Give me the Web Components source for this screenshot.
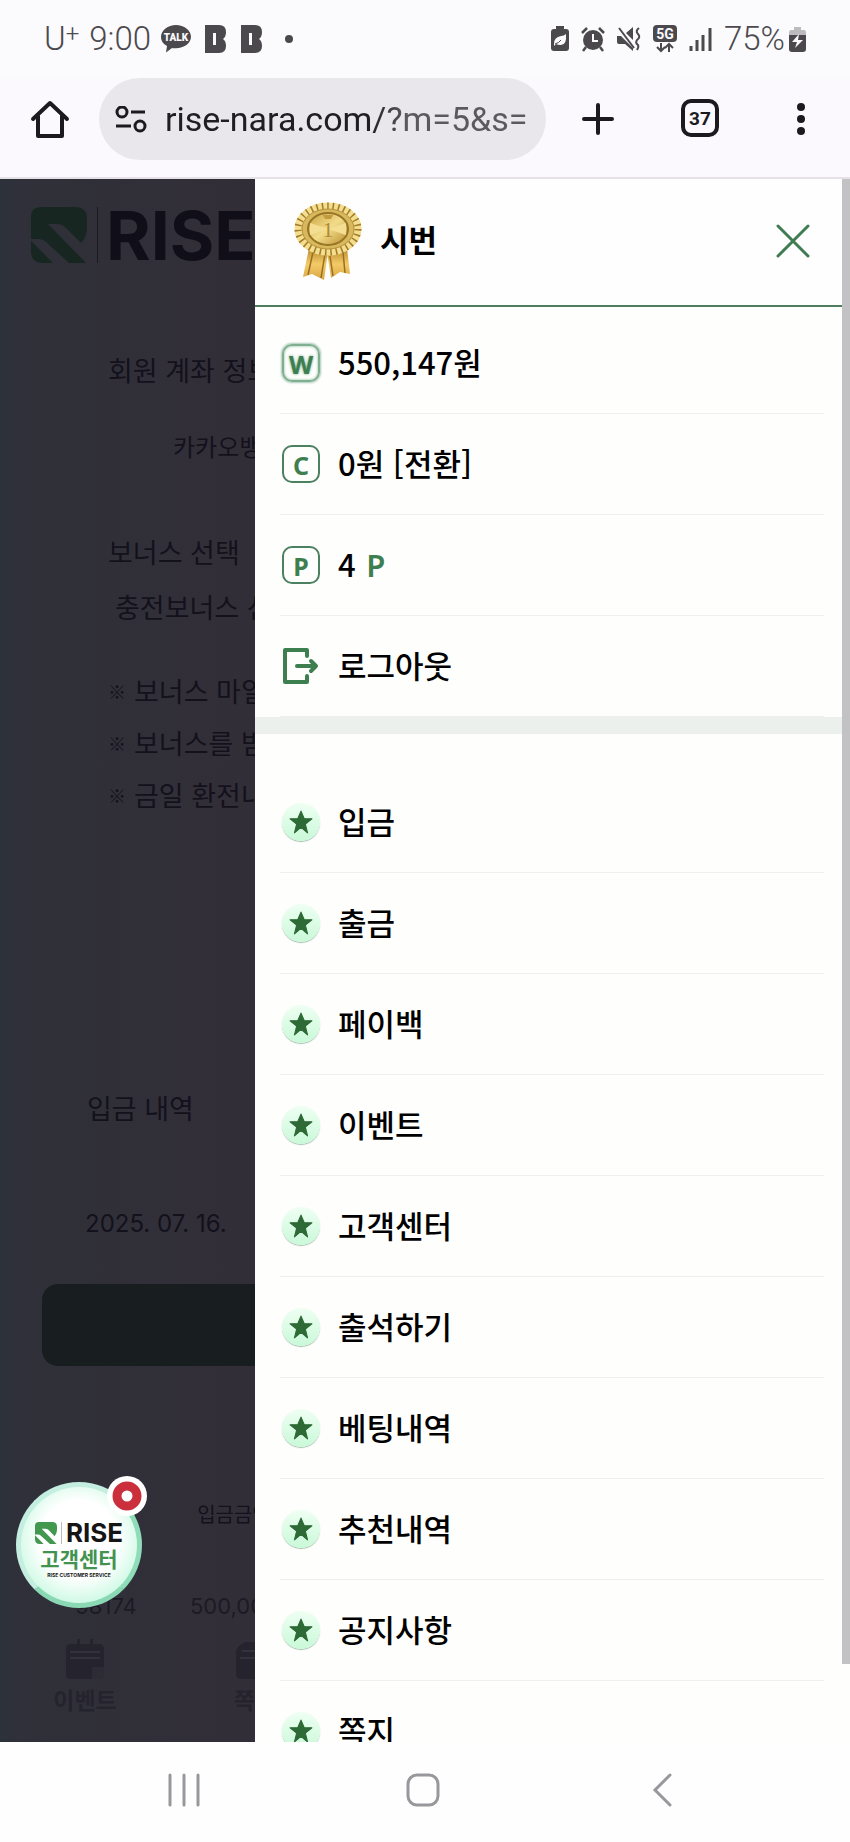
<!DOCTYPE html>
<html lang="ko">
<head>
<meta charset="utf-8">
<meta name="viewport" content="width=device-width, initial-scale=1">
<title>RISE</title>
<style>
    body {
        margin: 0;
        height: 100vh;
        font-family: "Noto Sans CJK KR", "Noto Sans", sans-serif;
        color: #000;
        background: #fefefe;
    }
</style>
</head>
<body>
<phone-screen>
    <status-bar slot="top"></status-bar>
    <browser-bar slot="top"></browser-bar>
    <deposit-page slot="page"></deposit-page>
    <chat-button slot="float"></chat-button>
    <side-drawer slot="drawer" name="시번">
        <menu-row slot="account"><letter-icon slot="icon" class="glow">W</letter-icon>550,147원</menu-row>
        <menu-row slot="account"><letter-icon slot="icon">C</letter-icon>0원 [전환]</menu-row>
        <menu-row slot="account"><letter-icon slot="icon">P</letter-icon>4 <point-unit>P</point-unit></menu-row>
        <menu-row slot="account" href="#logout"><logout-icon slot="icon"></logout-icon>로그아웃</menu-row>
        <menu-row href="#deposit"><star-icon slot="icon"></star-icon>입금</menu-row>
        <menu-row href="#withdraw"><star-icon slot="icon"></star-icon>출금</menu-row>
        <menu-row href="#payback"><star-icon slot="icon"></star-icon>페이백</menu-row>
        <menu-row href="#event"><star-icon slot="icon"></star-icon>이벤트</menu-row>
        <menu-row href="#support"><star-icon slot="icon"></star-icon>고객센터</menu-row>
        <menu-row href="#attend"><star-icon slot="icon"></star-icon>출석하기</menu-row>
        <menu-row href="#bets"><star-icon slot="icon"></star-icon>베팅내역</menu-row>
        <menu-row href="#referral"><star-icon slot="icon"></star-icon>추천내역</menu-row>
        <menu-row href="#notice"><star-icon slot="icon"></star-icon>공지사항</menu-row>
        <menu-row href="#memo"><star-icon slot="icon"></star-icon>쪽지</menu-row>
    </side-drawer>
    <system-nav slot="bottom"></system-nav>
</phone-screen>

<template id="phone-screen">
    <style>
        :host {
            display: flex;
            flex-direction: column;
            height: 100%;
        }
        main {
            flex: 1;
            min-height: 0;
            display: grid;
            grid-template: 100% / 30% 70%;
            overflow: hidden;
            position: relative;
        }
        .page {
            grid-area: 1 / 1 / 2 / 3;
            min-height: 0;
        }
        .drawer {
            grid-area: 1 / 2;
            min-height: 0;
            z-index: 2;
        }
        .float {
            position: absolute;
            left: 16px;
            bottom: 134px;
        }
    </style>
    <slot name="top"></slot>
    <main>
        <div class="page"><slot name="page"></slot></div>
        <div class="float"><slot name="float"></slot></div>
        <div class="drawer"><slot name="drawer"></slot></div>
    </main>
    <slot name="bottom"></slot>
</template>

<template id="status-bar">
    <style>
        :host {
            display: flex;
            justify-content: space-between;
            align-items: center;
            height: 78px;
            box-sizing: border-box;
            padding: 0 44px;
            background: #fbfafd;
            color: #4b494d;
            font: 300 33px/36px Roboto, "Noto Sans CJK KR", sans-serif;
        }
        div {
            display: flex;
            align-items: center;
        }
        sup {
            font-size: 24px;
            line-height: 1;
            vertical-align: 8px;
        }
        .time { margin: 0 10px; }
        .b { margin-left: 14px; }
        .dot { margin-left: 22px; }
        .right { gap: 12px; }
        .battery { margin-left: -8px; }
        svg { display: block; }
    </style>
    <div>
        <span>U<sup>+</sup></span>
        <span class="time">9:00</span>
        <svg width="30" height="28" viewBox="0 0 30 28">
            <path fill="#4b494d" d="M15 0C7 0 0 5 0 12c0 4 2 7 6 9L5 27.500l6-4.500c1 .200 3 .300 4 .300 8 0 15-5 15-11.500S23 0 15 0z"/>
            <text x="15" y="16" text-anchor="middle" font-family="Roboto, sans-serif" font-size="10" font-weight="900" fill="#fbfafd">TALK</text>
        </svg>
        <svg class="b" width="22" height="28" viewBox="0 0 22 28">
            <path fill="#4b494d" fill-rule="evenodd" d="M0 0H14Q21 0 21 7Q21 12 18 14Q21 16 21 21Q21 28 14 28H0ZM8 8V20H11V8Z"/>
        </svg>
        <svg class="b" width="22" height="28" viewBox="0 0 22 28">
            <path fill="#4b494d" fill-rule="evenodd" d="M0 0H14Q21 0 21 7Q21 12 18 14Q21 16 21 21Q21 28 14 28H0ZM8 8V20H11V8Z"/>
        </svg>
        <svg class="dot" width="8" height="8"><circle cx="4" cy="4" r="4" fill="#4b494d"/></svg>
    </div>
    <div class="right">
        <svg width="18" height="26" viewBox="0 0 18 26">
            <path fill="#4b494d" d="M5 0H13V3H15Q18 3 18 6V22Q18 25 15 25H3Q0 25 0 22V6Q0 3 3 3H5Z"/>
            <path fill="#fbfafd" d="M15 8Q16 20 9 19Q7 19 5 18L3 20V18Q3 11 10 10Q13 10 15 8Z"/>
            <path stroke="#4b494d" fill="none" d="M4 18Q8 17 10 14"/>
        </svg>
        <svg width="24" height="26" viewBox="0 0 24 26">
            <circle cx="12" cy="14" r="10" fill="#4b494d"/>
            <path fill="none" stroke="#4b494d" stroke-width="2.500" d="M1 7L6 2M23 7L18 2M5 21L2 25M19 21L22 25"/>
            <path fill="none" stroke="#fbfafd" stroke-width="2" d="M12 8V15H17"/>
        </svg>
        <svg width="24" height="26" viewBox="0 0 24 26">
            <path fill="#4b494d" d="M0 10H4L16 22V25L8 18H2Q0 18 0 16ZM9 7L16 1V14Z"/>
            <path fill="none" stroke="#4b494d" stroke-width="2" d="M2 2L17 22M22 2Q18 5 21 8Q24 11 20 14Q18 17 21 19Q22 21 20 24"/>
        </svg>
        <svg width="24" height="28" viewBox="0 0 24 28">
            <rect width="24" height="17" rx="4" fill="#4b494d"/>
            <text x="12" y="14" text-anchor="middle" font-family="Roboto, sans-serif" font-size="14" font-weight="700" fill="#fbfafd">5G</text>
            <path fill="none" stroke="#4b494d" stroke-width="2" d="M8 18V26M4 22L8 26L12 22M16 27V19M12 23L16 19L20 23"/>
        </svg>
        <svg width="23" height="24" viewBox="0 0 23 24">
            <path fill="none" stroke="#4b494d" stroke-width="3" d="M2 19V24M8 13V24M14 8V24M21 1V24"/>
        </svg>
        <span>75%</span>
        <svg class="battery" width="17" height="25" viewBox="0 0 17 25">
            <path fill="#bdbbc0" d="M5 0H12V3H15Q17 3 17 6V9H0V6Q0 3 2 3H5Z"/>
            <path fill="#4b494d" d="M0 8H17V22Q17 25 14 25H3Q0 25 0 22Z"/>
            <path fill="#fbfafd" d="M10 7L3 15H8L6 21L14 13H9Z"/>
        </svg>
    </div>
</template>

<template id="browser-bar">
    <style>
        :host {
            display: flex;
            align-items: center;
            box-sizing: border-box;
            height: 101px;
            padding: 0 30px 17px;
            border-bottom: 2px solid #e4e2e7;
            background: #fbf9fe;
        }
        button {
            border: 0;
            padding: 0;
            background: none;
            color: #1b1a1f;
            display: grid;
            place-items: center;
            width: 40px;
            height: 40px;
        }
        .address {
            flex: 1;
            min-width: 0;
            display: flex;
            align-items: center;
            gap: 18px;
            height: 82px;
            box-sizing: border-box;
            margin: 0 32px 0 29px;
            padding: 0 16px;
            border-radius: 41px;
            background: #e9e7ec;
        }
        .address svg { flex: none; }
        input {
            flex: 1;
            min-width: 0;
            border: 0;
            padding: 0;
            outline: 0;
            font: 400 34px/44px Roboto, sans-serif;
            color: transparent;
            background: linear-gradient(90deg, #1f1e23 56%, #5a595e 66%);
            -webkit-background-clip: text;
            background-clip: text;
        }
        .tools {
            display: flex;
            gap: 63px;
        }
        .tabs {
            box-sizing: border-box;
            width: 38px;
            height: 38px;
            border: 4px solid #1b1a1f;
            border-radius: 10px;
            font: 700 19px/1 Roboto, sans-serif;
        }
        .more { width: 38px; }
    </style>
    <button aria-label="홈">
        <svg width="40" height="40" viewBox="0 0 40 40" fill="none" stroke="#1b1a1f" stroke-width="4" stroke-linejoin="round" stroke-linecap="round">
            <path d="M3 20L20 4L37 20M8 17V37H32V17"/>
        </svg>
    </button>
    <div class="address">
        <svg width="32" height="27" viewBox="0 0 32 27" fill="none" stroke="#1b1a1f" stroke-width="3">
            <circle cx="7" cy="6" r="5"/><circle cx="25" cy="20" r="5"/>
            <path d="M16 6H30M1 20H16"/>
        </svg>
        <input value="rise-nara.com/?m=5&amp;s=" aria-label="주소">
    </div>
    <div class="tools">
        <button aria-label="새 탭">
            <svg width="34" height="34" viewBox="0 0 34 34"><path stroke="#1b1a1f" stroke-width="4" stroke-linecap="round" d="M17 3V31M3 17H31"/></svg>
        </button>
        <button class="tabs">37</button>
        <button class="more" aria-label="더보기">
            <svg width="10" height="34" fill="#1b1a1f"><circle cx="5" cy="5" r="4"/><circle cx="5" cy="17" r="4"/><circle cx="5" cy="29" r="4"/></svg>
        </button>
    </div>
</template>

<template id="rise-mark">
    <style>
        :host {
            display: block;
            flex: none;
        }
        svg {
            display: block;
            width: 100%;
            height: 100%;
        }
    </style>
    <svg viewBox="0 0 56 56" fill="currentColor">
        <path d="M10 0H44Q56 0 56 12V20Q56 30 50 36L34 20Q31 17 26 17H17L55 56H38L15 35Q12 32 8 32H0V10Q0 0 10 0Z"/>
        <path d="M0 34L22 56H12Q0 56 0 44Z"/>
    </svg>
</template>

<template id="deposit-page">
    <style>
        :host {
            display: flex;
            flex-direction: column;
            height: 100%;
            box-sizing: border-box;
            color: #13111c;
            font-size: 27px;
            line-height: 40px;
            white-space: nowrap;
            background: linear-gradient(90deg, #2d323a, #2f3039 2%, #322e38 30%);
        }
        header {
            display: flex;
            align-items: center;
            flex: none;
            height: 112px;
            padding-left: 31px;
            font: 700 68px/56px Inter, sans-serif;
            color: #100e19;
        }
        rise-mark {
            width: 56px;
            height: 56px;
            color: #172621;
        }
        .line {
            width: 1px;
            height: 56px;
            margin: 0 8px 0 10px;
            background: #1b1a24;
        }
        h2, p, ul {
            margin: 0;
            padding: 0;
            font-size: 27px;
            font-weight: 400;
        }
        .form { padding: 59px 0 0 108px; }
        .bank {
            padding: 36px 0 0 65px;
            font-size: 24px;
        }
        .bonus { padding-top: 66px; }
        .select { padding: 15px 0 0 7px; }
        ul {
            list-style: none;
            padding-top: 38px;
            line-height: 52px;
        }
        li {
            display: grid;
            grid-template-columns: 26px auto;
        }
        li b {
            font-size: 18px;
        }
        .history {
            padding: 267px 0 0 87px;
        }
        .date {
            padding: 76px 0 0 85px;
            font: 400 24px/40px Inter, sans-serif;
        }
        .search {
            border: 0;
            margin: 40px 42px 0;
            height: 82px;
            flex: none;
            border-radius: 16px;
            background: #181d20;
        }
        table {
            width: 256px;
            margin: 102px 0 0 42px;
            table-layout: fixed;
            border-collapse: collapse;
            text-align: center;
            font-size: 20px;
            flex: none;
        }
        th {
            padding: 0;
            height: 92px;
            font-weight: 400;
        }
        td {
            padding: 31px 0 0;
            font: 400 22px/30px Inter, sans-serif;
            color: #1c1a25;
        }
        nav {
            display: grid;
            grid-template-columns: repeat(5, 1fr);
            margin-top: auto;
            padding-bottom: 27px;
        }
        nav a {
            display: flex;
            flex-direction: column;
            align-items: center;
            gap: 4px;
            text-decoration: none;
            color: #25232d;
            font-size: 23px;
            font-weight: 700;
            line-height: 32px;
        }
    </style>
    <header><rise-mark></rise-mark><span class="line"></span>RISE</header>
    <section class="form">
        <h2>회원 계좌 정보</h2>
        <p class="bank">카카오뱅크</p>
        <h2 class="bonus">보너스 선택</h2>
        <p class="select">충전보너스 선택</p>
        <ul>
            <li><b>※</b> 보너스 마일</li>
            <li><b>※</b> 보너스를 받</li>
            <li><b>※</b> 금일 환전내</li>
        </ul>
    </section>
    <h2 class="history">입금 내역</h2>
    <p class="date">2025. 07. 16.</p>
    <button class="search" aria-label="조회"></button>
    <table>
        <tr><th></th><th>입금금액</th></tr>
        <tr><td>98174</td><td>500,000</td></tr>
    </table>
    <nav>
        <a href="#event">
            <svg width="38" height="40" viewBox="0 0 38 40">
                <path fill="#25232d" d="M11 0H14V5H24V0H27V5H33Q38 5 38 10V35Q38 40 33 40H5Q0 40 0 35V10Q0 5 5 5H11Z"/>
                <path stroke="#34313c" stroke-width="2" d="M4 13H34M4 19H34"/>
                <path fill="#2d2b35" d="M26 28H38V35Q38 40 33 40H26Z"/>
            </svg>
            이벤트
        </a>
        <a href="#memo">
            <svg width="38" height="40" viewBox="0 0 38 40">
                <path fill="#25232d" d="M10 3H28L38 12V35Q38 40 33 40H5Q0 40 0 35V12Q2 6 10 3Z"/>
                <path stroke="#34313c" stroke-width="2" d="M6 12H32M4 19H34"/>
            </svg>
            쪽지
        </a>
    </nav>
</template>

<template id="chat-button">
    <style>
        :host { display: block; }
        button {
            position: relative;
            display: flex;
            flex-direction: column;
            align-items: center;
            box-sizing: border-box;
            width: 126px;
            height: 126px;
            padding: 35px 0 0;
            border: 5px solid #a5e4c9;
            border-color: #c4eee0 #8fdcb9 #8bd8b5 #c4eee0;
            border-radius: 50%;
            background: radial-gradient(circle at 50% 45%, #fff 45%, #d3fae7 72%);
            font-family: inherit;
            color: #151515;
        }
        .logo {
            display: flex;
            align-items: center;
            font: 700 26px/22px Inter, sans-serif;
        }
        rise-mark {
            width: 22px;
            height: 22px;
            color: #43984f;
        }
        i {
            width: 1px;
            height: 22px;
            margin: 0 4px;
            background: #bbb;
        }
        strong {
            font-size: 21px;
            line-height: 28px;
            color: #439350;
        }
        small {
            font: 700 5px/6px Inter, sans-serif;
        }
        .badge {
            position: absolute;
            top: -11px;
            right: -10px;
            width: 40px;
            height: 40px;
        }
    </style>
    <button>
        <span class="logo"><rise-mark></rise-mark><i></i>RISE</span>
        <strong>고객센터</strong>
        <small>RISE CUSTOMER SERVICE</small>
        <svg class="badge" viewBox="0 0 40 40">
            <circle cx="20" cy="20" r="20" fill="#fff"/>
            <circle cx="20" cy="20" r="10" fill="#fff" stroke="#cb2f3b" stroke-width="9"/>
        </svg>
    </button>
</template>

<template id="medal-icon">
    <style>
        :host { display: block; }
        svg { display: block; }
    </style>
    <svg width="68" height="78" viewBox="0 0 68 78">
        <defs>
            <linearGradient id="gold" x1="0" y1="0" x2="1" y2="1">
                <stop offset="0" stop-color="#c9a23e"/>
                <stop offset=".5" stop-color="#f3dc8a"/>
                <stop offset="1" stop-color="#b98d2c"/>
            </linearGradient>
            <linearGradient id="tail" x1="0" y1="0" x2="0" y2="1">
                <stop offset="0" stop-color="#b88a2d"/>
                <stop offset=".5" stop-color="#f4ca68"/>
                <stop offset="1" stop-color="#d9a744"/>
            </linearGradient>
        </defs>
        <path fill="url(#tail)" d="M15 46L9 75L18 72L30 78L34 50ZM53 46L56 72L46 70L37 76L33 50Z"/>
        <path fill="none" stroke="#98701f" stroke-width="1.500" d="M19 50L14 73M31 52L27 76M49 50L51 71M36 54L39 74"/>
        <ellipse cx="34" cy="27" rx="33" ry="26" fill="#e2c263"/>
        <ellipse cx="34" cy="27" rx="30" ry="23" fill="none" stroke="#f3dd8f" stroke-width="7"/>
        <ellipse cx="34" cy="27" rx="30" ry="23" fill="none" stroke="#a37a28" stroke-width="7" stroke-dasharray="1.500 3.900"/>
        <ellipse cx="34" cy="27" rx="26" ry="20" fill="#d7b85c" stroke="#b8933c"/>
        <ellipse cx="34" cy="27" rx="20" ry="16" fill="url(#gold)" stroke="#987426" stroke-width="2"/>
        <path fill="#f3de92" d="M34 27L16 21V33ZM34 27L52 21V33Z"/>
        <path fill="#c09b3d" d="M29 13H39L37 17H31Z"/>
        <text x="34" y="35" text-anchor="middle" font-family="Liberation Serif, serif" font-size="22" fill="#b08a35">1</text>
    </svg>
</template>

<template id="side-drawer">
    <style>
        :host {
            display: flex;
            height: 100%;
            background: #fefefd;
        }
        .panel {
            flex: 1;
            margin-right: -8px;
            overflow: hidden;
        }
        header {
            display: flex;
            align-items: center;
            box-sizing: border-box;
            height: 128px;
            padding: 0 32px 2px 39px;
            border-bottom: 2px solid #4e7d60;
            background: #fefefe;
        }
        h1 {
            flex: 1;
            margin: 0 0 4px 18px;
            font-size: 31px;
            line-height: 44px;
            font-weight: 700;
        }
        button {
            border: 0;
            padding: 8px;
            background: none;
        }
        button svg { display: block; }
        .account {
            padding: 6px 26px 0 25px;
            border-bottom: 17px solid #ebf0ed;
        }
        .menu { padding: 38px 26px 0 25px; }
        .scroll {
            flex: none;
            width: 8px;
            height: 95%;
            background: #c2c1c4;
            z-index: 1;
        }
    </style>
    <div class="panel">
        <header>
            <medal-icon></medal-icon>
            <h1></h1>
            <button aria-label="닫기">
                <svg width="34" height="34" viewBox="0 0 34 34"><path stroke="#3f7c52" stroke-width="3" stroke-linecap="round" d="M2 2L32 32M32 2L2 32"/></svg>
            </button>
        </header>
        <section class="account"><slot name="account"></slot></section>
        <nav class="menu"><slot></slot></nav>
    </div>
    <div class="scroll"></div>
</template>

<template id="menu-row">
    <style>
        :host {
            display: block;
            border-bottom: 1px solid #f0eeef;
        }
        a {
            display: flex;
            align-items: center;
            gap: 18px;
            height: 100px;
            padding-left: 2px;
            color: inherit;
            text-decoration: none;
            font-size: 31px;
            font-weight: 500;
            line-height: 44px;
        }
        span { padding-bottom: 3px; }
    </style>
    <a><slot name="icon"></slot><span><slot></slot></span></a>
</template>

<template id="point-unit">
    <style>
        :host {
            margin-left: 2px;
            color: #3e7f50;
            font-family: "Noto Sans", sans-serif;
            font-weight: 600;
            line-height: 1;
        }
    </style>
    <slot></slot>
</template>

<template id="letter-icon">
    <style>
        :host {
            display: block;
            box-sizing: border-box;
            width: 38px;
            height: 38px;
            border: 2px solid #4b8160;
            border-radius: 10px;
            text-align: center;
            font: 700 25px/36px "Noto Sans", sans-serif;
            color: #3e7f50;
        }
        :host(.glow) {
            border-color: #7fae90;
            box-shadow: 0 0 2px 1px #a9cab5, inset 0 0 2px 1px #c3dccb;
            text-shadow: 0 0 3px #6fa582;
        }
    </style>
    <slot></slot>
</template>

<template id="logout-icon">
    <style>
        :host { display: block; }
        svg { display: block; }
    </style>
    <svg width="38" height="38" viewBox="0 0 38 38" fill="none" stroke="#3e7f50" stroke-width="4" stroke-linejoin="round" stroke-linecap="round">
        <path d="M25 9V3H3V35H25V29M15 19H34M29 14L34 19L29 24"/>
    </svg>
</template>

<template id="star-icon">
    <style>
        :host {
            display: grid;
            place-items: center;
            width: 38px;
            height: 38px;
            border-radius: 50%;
            background: linear-gradient(#effff3, #c9f9d8);
            box-shadow: 0 1px 1px #a5bfae;
        }
    </style>
    <svg width="24" height="24" viewBox="0 0 22 22">
        <path fill="#2d6a35" stroke="#2d6a35" stroke-linejoin="round" d="M11 1L14 8L21 8L15 13L17 21L11 16L5 21L7 13L1 8L8 8Z"/>
    </svg>
</template>

<template id="system-nav">
    <style>
        :host {
            display: grid;
            grid-template-columns: repeat(3, 1fr);
            height: 100px;
            padding: 0 68px 0 64px;
            background: #fefefe;
        }
        button {
            display: grid;
            place-items: center;
            border: 0;
            padding: 0 0 4px;
            background: none;
        }
        svg {
            fill: none;
            stroke: #98979b;
            stroke-width: 3;
            stroke-linecap: round;
        }
    </style>
    <button aria-label="최근 앱"><svg width="32" height="34" viewBox="0 0 32 34"><path d="M2 2V32M16 2V32M30 2V32"/></svg></button>
    <button aria-label="홈"><svg width="34" height="34" viewBox="0 0 34 34"><rect x="2" y="2" width="30" height="30" rx="9"/></svg></button>
    <button aria-label="뒤로"><svg width="20" height="34" viewBox="0 0 20 34"><path d="M18 2L3 17L18 32"/></svg></button>
</template>

<script>
    class TemplateElement extends HTMLElement {
        constructor() {
            super();
            const template = document.getElementById(this.localName);
            const shadow = this.attachShadow({mode: 'open'});
            shadow.appendChild(template.content.cloneNode(true));
        }
    }

    class SideDrawer extends TemplateElement {
        connectedCallback() {
            this.shadowRoot.querySelector('h1').textContent = this.getAttribute('name');
            this.shadowRoot.querySelector('button').addEventListener('click', () => {
                this.style.display = 'none';
            });
        }
    }

    class MenuRow extends TemplateElement {
        connectedCallback() {
            // rows without a target are plain balance lines
            if (this.hasAttribute('href')) {
                this.shadowRoot.querySelector('a').href = this.getAttribute('href');
            }
        }
    }

    customElements.define('side-drawer', SideDrawer);
    customElements.define('menu-row', MenuRow);

    ['rise-mark', 'phone-screen', 'status-bar', 'browser-bar', 'deposit-page', 'chat-button',
        'medal-icon', 'point-unit', 'letter-icon', 'logout-icon', 'star-icon', 'system-nav'
    ].forEach((name) => customElements.define(name, class extends TemplateElement {}));
</script>
</body>
</html>
